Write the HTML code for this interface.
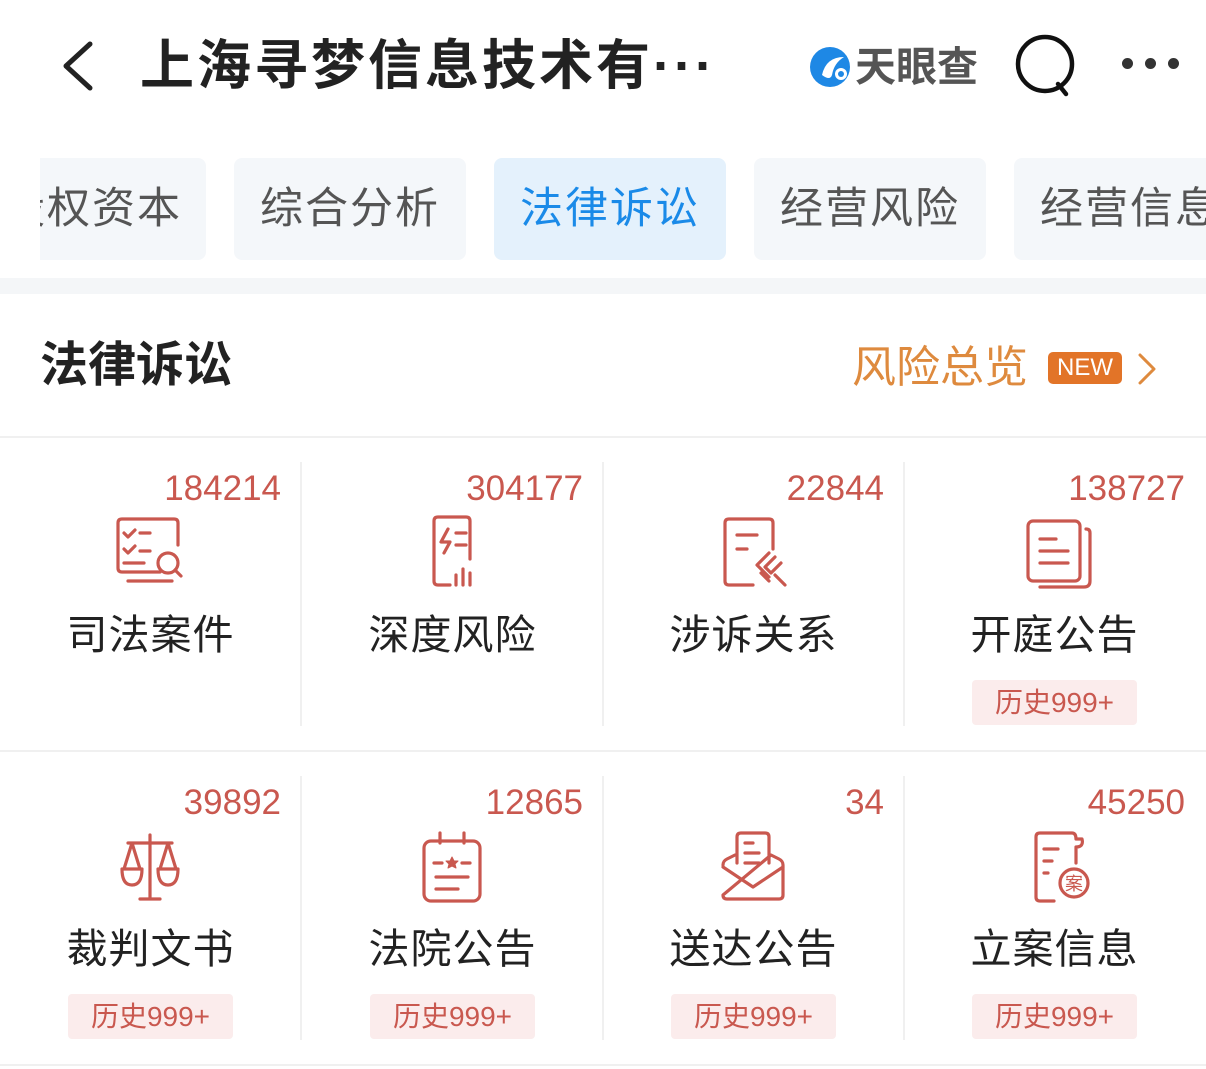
<!DOCTYPE html>
<html><head><meta charset="utf-8"><style>
*{margin:0;padding:0;box-sizing:border-box}
body{width:1206px;height:1069px;background:#fff;font-family:"Liberation Sans","Noto Sans CJK SC",sans-serif;position:relative;overflow:hidden;color:#222}
.abs{position:absolute}
.tab{position:absolute;top:158px;height:102px;width:232px;background:#f4f7fa;border-radius:8px;font-size:43px;color:#555;line-height:102px;text-align:center;letter-spacing:2px}
.cell{position:absolute;width:301px;height:313px}
.num{position:absolute;right:20px;top:30px;font-size:35px;color:#c9584f;line-height:44px}
.ic{position:absolute;left:110px;top:78px;width:80px;height:75px}
.lab{position:absolute;left:0;width:100%;top:170px;text-align:center;font-size:41px;color:#222;line-height:56px;letter-spacing:1px}
.bad{position:absolute;left:68px;top:243px;width:165px;height:45px;background:#fbecec;border-radius:4px;color:#c9584f;font-size:28px;line-height:45px;text-align:center}
.vd{position:absolute;width:2px;background:#f0f0f0}
svg{fill:none;stroke:#c9584f;stroke-width:3.2;stroke-linecap:round;stroke-linejoin:round}
</style></head><body>
<svg class="abs" style="left:58px;top:40px;stroke:#222;stroke-width:5" width="40" height="52" viewBox="0 0 40 52"><path d="M32 4 L8 26 L32 48"/></svg>
<div class="abs" style="left:140px;top:32px;font-size:54px;font-weight:bold;line-height:68px;color:#222;letter-spacing:3px">上海寻梦信息技术有···</div>
<svg class="abs" style="left:808px;top:45px;stroke:none" width="46" height="44" viewBox="0 0 46 44"><circle cx="22" cy="22" r="20" fill="#1e88e5"/><path d="M14 30 Q18 12 36 12 Q26 18 24 30 Q22 36 14 30Z" fill="#fff"/><circle cx="33" cy="29" r="6" fill="#fff"/><circle cx="33" cy="29" r="3" fill="#1e88e5"/></svg>
<div class="abs" style="left:855px;top:42px;font-size:41px;font-weight:bold;color:#555;line-height:50px">天眼查</div>
<svg class="abs" style="left:1012px;top:34px;stroke:#111;stroke-width:4.5" width="70" height="64" viewBox="0 0 70 64"><circle cx="33" cy="30" r="27"/><path d="M46 50 L54 60"/></svg>
<div class="abs" style="left:1122px;top:58px;width:60px;height:12px">
<span class="abs" style="left:0;width:11px;height:11px;border-radius:50%;background:#333"></span>
<span class="abs" style="left:23px;width:11px;height:11px;border-radius:50%;background:#333"></span>
<span class="abs" style="left:46px;width:11px;height:11px;border-radius:50%;background:#333"></span></div>
<div class="tab" style="left:-26px;text-align:right;padding-right:24px;overflow:hidden"><span style="position:absolute;right:24px">股权资本</span></div>
<div class="abs" style="left:0;top:158px;width:40px;height:102px;background:#fff"></div>
<div class="tab" style="left:234px">综合分析</div>
<div class="tab" style="left:494px;background:#e4f1fc;color:#1a8ae8">法律诉讼</div>
<div class="tab" style="left:754px">经营风险</div>
<div class="tab" style="left:1014px;text-align:left;padding-left:26px;width:250px">经营信息</div>
<div class="abs" style="left:0;top:278px;width:1206px;height:16px;background:#f4f6f8"></div>
<div class="abs" style="left:40px;top:334px;font-size:48px;font-weight:bold;line-height:64px;color:#222">法律诉讼</div>
<div class="abs" style="left:852px;top:340px;font-size:44px;color:#de8a3e;line-height:56px">风险总览</div>
<div class="abs" style="left:1048px;top:352px;width:74px;height:32px;background:#e27428;border-radius:5px;color:#fff;font-size:24px;line-height:32px;text-align:center">NEW</div>
<svg class="abs" style="left:1136px;top:352px;stroke:#de8a3e;stroke-width:3" width="22" height="34" viewBox="0 0 22 34"><path d="M4 3 L18 17 L4 31"/></svg>
<div class="abs" style="left:0;top:436px;width:1206px;height:2px;background:#f0f0f0"></div>
<div class="abs" style="left:0;top:750px;width:1206px;height:2px;background:#f0f0f0"></div>
<div class="abs" style="left:0;top:1064px;width:1206px;height:2px;background:#f0f0f0"></div>
<div class="vd" style="left:300px;top:462px;height:264px"></div>
<div class="vd" style="left:602px;top:462px;height:264px"></div>
<div class="vd" style="left:903px;top:462px;height:264px"></div>
<div class="vd" style="left:300px;top:776px;height:264px"></div>
<div class="vd" style="left:602px;top:776px;height:264px"></div>
<div class="vd" style="left:903px;top:776px;height:264px"></div>

<div class="cell" style="left:0;top:437px"><div class="num">184214</div>
<svg class="ic" viewBox="0 0 80 75"><path d="M50 57 H12 Q8 57 8 53 V8 Q8 4 12 4 H64 Q68 4 68 8 V30"/><path d="M14 18 l4 4 l7 -7 M30 18 h10 M14 34 l4 4 l7 -7 M30 36 h10 M14 48 h20 M18 66 h44"/><circle cx="58" cy="48" r="10"/><path d="M65 55 l6 6"/></svg>
<div class="lab">司法案件</div></div>
<div class="cell" style="left:302px;top:437px"><div class="num">304177</div>
<svg class="ic" viewBox="0 0 80 75"><path d="M38 70 H26 Q22 70 22 66 V6 Q22 2 26 2 H54 Q58 2 58 6 V44"/><path d="M36 14 L29 27 H38 L32 38 M44 18 h10 M44 30 h10 M44 60 v10 M51 54 v16 M58 58 v12"/></svg>
<div class="lab">深度风险</div></div>
<div class="cell" style="left:603px;top:437px"><div class="num">22844</div>
<svg class="ic" viewBox="0 0 80 75"><path d="M40 70 H16 Q12 70 12 66 V8 Q12 4 16 4 H56 Q60 4 60 8 V34"/><path d="M24 20 h20 M24 34 h10 M56 38 l-12 12 l12 12 M62 42 l-10 10 l6 6 l10 -10 M48 58 l8 8 M62 60 l10 10"/></svg>
<div class="lab">涉诉关系</div></div>
<div class="cell" style="left:904px;top:437px"><div class="num">138727</div>
<svg class="ic" viewBox="0 0 80 75"><rect x="14" y="6" width="52" height="60" rx="5"/><path d="M72 14 Q76 14 76 18 V66 Q76 72 70 72 H26 M26 24 h16 M26 36 h28 M26 48 h28"/></svg>
<div class="lab">开庭公告</div><div class="bad">历史999+</div></div>

<div class="cell" style="left:0;top:751px"><div class="num">39892</div>
<svg class="ic" viewBox="0 0 80 75"><path d="M40 6 V70 M18 14 H62 M30 70 H50 M22 14 L14 40 M22 14 L30 40 M58 14 L50 40 M58 14 L66 40 M12 40 Q12 56 22 56 Q32 56 32 40 Z M48 40 Q48 56 58 56 Q68 56 68 40 Z"/></svg>
<div class="lab">裁判文书</div><div class="bad">历史999+</div></div>
<div class="cell" style="left:302px;top:751px"><div class="num">12865</div>
<svg class="ic" viewBox="0 0 80 75"><rect x="12" y="12" width="56" height="60" rx="7"/><path d="M28 4 V14 M52 4 V14 M22 34 h8 M50 34 h8 M24 48 h32 M24 60 h22"/><path d="M40 28 l2 4 h4 l-3 3 l1 4 l-4 -2 l-4 2 l1 -4 l-3 -3 h4z" fill="#c9584f" stroke-width="1"/></svg>
<div class="lab">法院公告</div><div class="bad">历史999+</div></div>
<div class="cell" style="left:603px;top:751px"><div class="num">34</div>
<svg class="ic" viewBox="0 0 80 75"><path d="M24 34 V8 Q24 4 28 4 H52 Q56 4 56 8 V34 M32 14 h8 M32 24 h14 M32 34 h14 M10 36 Q10 32 14 30 L22 26 M58 26 L66 30 Q70 32 70 36 V66 Q70 70 66 70 H14 Q10 70 10 66 Z M10 38 L40 58 L70 38"/></svg>
<div class="lab">送达公告</div><div class="bad">历史999+</div></div>
<div class="cell" style="left:904px;top:751px"><div class="num">45250</div>
<svg class="ic" viewBox="0 0 80 75"><path d="M40 72 H26 Q22 72 22 68 V8 Q22 4 26 4 H58 Q62 4 62 10 H68 Q70 18 62 18 V34 M30 20 h14 M30 32 h8 M30 44 h4"/><circle cx="60" cy="54" r="14"/><text x="60" y="61" font-size="18" fill="#c9584f" stroke="none" text-anchor="middle" font-family="Noto Sans CJK SC,sans-serif">案</text></svg>
<div class="lab">立案信息</div><div class="bad">历史999+</div></div>
</body></html>
